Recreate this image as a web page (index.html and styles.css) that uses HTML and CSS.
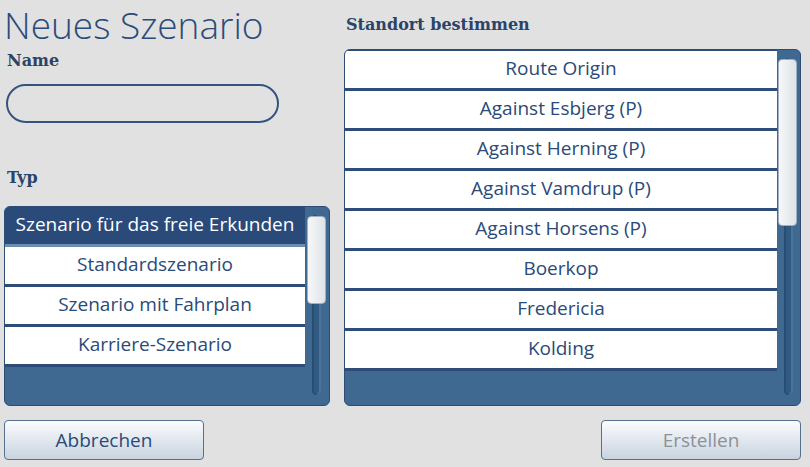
FILE: index.html
```html
<!DOCTYPE html>
<html lang="de">
<head>
<meta charset="utf-8">
<title>Neues Szenario</title>
<link rel="stylesheet" href="styles.css">
</head>
<body>
<div class="page">
  <div class="col-left">
    <h1 class="title">Neues Szenario</h1>
    <div class="label label-name">Name</div>
    <input class="name-input" type="text">
    <div class="label label-typ">Typ</div>
    <div class="panel panel-typ">
      <ul class="items">
        <li class="item selected">Szenario für das freie Erkunden</li>
        <li class="item">Standardszenario</li>
        <li class="item">Szenario mit Fahrplan</li>
        <li class="item">Karriere-Szenario</li>
      </ul>
      <div class="scroll">
        <div class="rail"></div>
        <div class="thumb thumb-typ"></div>
      </div>
    </div>
  </div>
  <div class="col-right">
    <div class="label label-standort">Standort bestimmen</div>
    <div class="panel panel-standort">
      <ul class="items">
        <li class="item">Route Origin</li>
        <li class="item">Against Esbjerg (P)</li>
        <li class="item">Against Herning (P)</li>
        <li class="item">Against Vamdrup (P)</li>
        <li class="item">Against Horsens (P)</li>
        <li class="item">Boerkop</li>
        <li class="item">Fredericia</li>
        <li class="item">Kolding</li>
      </ul>
      <div class="scroll">
        <div class="rail"></div>
        <div class="thumb thumb-standort"></div>
      </div>
    </div>
  </div>
  <div class="buttons">
    <button class="btn">Abbrechen</button>
    <button class="btn disabled">Erstellen</button>
  </div>
</div>
</body>
</html>
```

FILE: styles.css
```css
html, body {
  margin: 0;
  padding: 0;
  background: #e1e1e1;
}
.page {
  width: 810px;
  height: 467px;
  box-sizing: border-box;
  padding: 0 9px 0 4px;
  display: grid;
  grid-template-columns: 326px 1fr;
  grid-template-rows: 406px 61px;
  column-gap: 14px;
  font-family: "Open Sans", "DejaVu Sans", sans-serif;
  color: #2a4a78;
}
.col-left, .col-right {
  display: flex;
  flex-direction: column;
}
.title {
  margin: 0;
  height: 50px;
  font-size: 37px;
  line-height: 50px;
  font-weight: 300;
  color: #2b4b7a;
  padding-left: 0;
}
.label {
  font-family: "DejaVu Serif", serif;
  font-size: 16px;
  font-weight: bold;
  color: #2a4468;
  line-height: 24px;
  padding-left: 3px;
}
.label-name {
  margin-top: -1px;
}
.name-input {
  margin-top: 11px;
  margin-left: 2px;
  width: 273px;
  height: 39px;
  box-sizing: border-box;
  border: 2px solid #34547f;
  border-radius: 20px;
  background: transparent;
  outline: none;
}
.label-typ {
  margin-top: 43px;
}
.label-standort {
  margin-top: 13px;
  padding-left: 2px;
}
.panel {
  display: flex;
  background: #3f6991;
  border: 1px solid #2e4d76;
  border-radius: 6px;
  overflow: hidden;
  box-sizing: border-box;
}
.panel-typ {
  margin-top: 16px;
  height: 200px;
}
.panel-standort {
  margin-top: 12px;
  height: 358px;
}
.items {
  list-style: none;
  margin: 0;
  padding: 0;
  flex: 1;
}
.item {
  line-height: 35px;
  padding-bottom: 2px;
  box-sizing: border-box;
  height: 40px;
  background: #ffffff;
  background-clip: padding-box;
  border-bottom: 3px solid #2d4c77;
  text-align: center;
  font-size: 19px;
  color: #2a4a78;
  white-space: nowrap;
}
.item.selected {
  background: #2a4a7a;
  color: #ffffff;
  border-bottom-color: #6a8db0;
}
.panel-standort .items {
  border-top: 1px solid #2d4c77;
}
.scroll {
  position: relative;
  width: 24px;
  flex: none;
}
.panel-standort .scroll {
  width: 23px;
}
.rail {
  position: absolute;
  left: 7px;
  width: 9px;
  top: 8px;
  bottom: 10px;
  border-radius: 5px;
  background: #315a82;
  box-shadow: inset 2px 0 0 #2a4d74, inset -2px 0 0 #4b7399;
}
.thumb {
  position: absolute;
  left: 2px;
  width: 19px;
  border-radius: 4px;
  background: linear-gradient(to right, #f6f7f8, #dfe3e7);
  border: 1px solid #9fb0c2;
  box-sizing: border-box;
}
.thumb-typ {
  top: 9px;
  height: 88px;
}
.thumb-standort {
  left: 1px;
  top: 9px;
  height: 167px;
}
.buttons {
  grid-column: 1 / 3;
  display: flex;
  justify-content: space-between;
  align-items: flex-start;
  padding-top: 14px;
}
.btn {
  width: 200px;
  height: 40px;
  box-sizing: border-box;
  border: 1px solid #55718f;
  border-radius: 4px;
  background: linear-gradient(to bottom, #fbfcfe, #c8d3df);
  font-family: "Open Sans", "DejaVu Sans", sans-serif;
  font-size: 19px;
  color: #2a4a78;
  padding: 0;
}
.btn.disabled {
  color: #8b9199;
}
```
